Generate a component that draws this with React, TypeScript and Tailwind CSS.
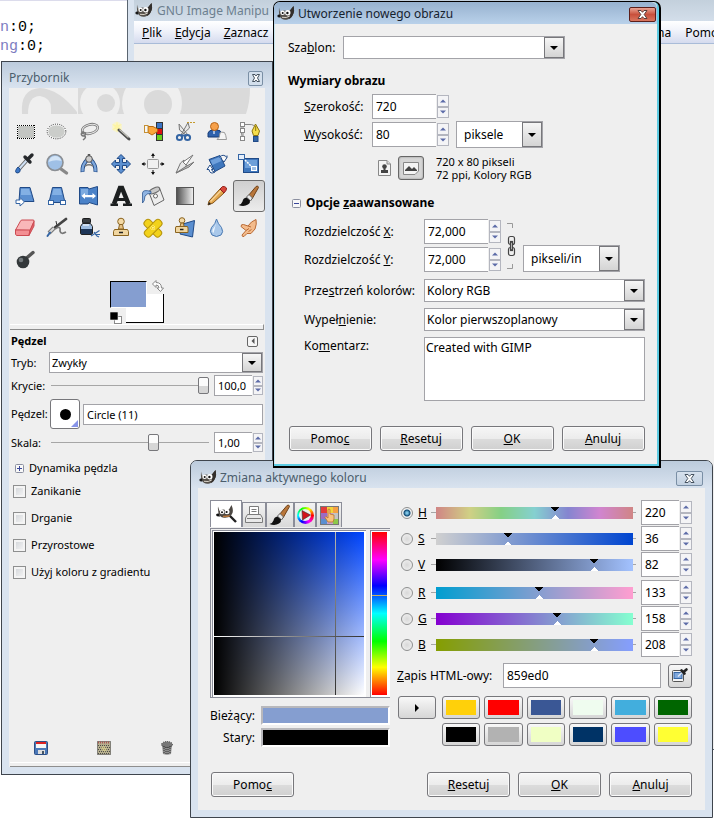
import React, { useState } from "react";
import type { ReactNode } from "react";

const FONT = "font-['Noto_Sans','Open_Sans',sans-serif]";

/* ---------- small shared pieces ---------- */

function Wilber({ size = 18 }: { size?: number }) {
  return (
    <svg width={size} height={size} viewBox="0 0 18 18" aria-hidden="true" className="shrink-0">
      <path d="M2 2.500 3 7Q4.500 5.500 7 5.500Q10 6.300 13 5.500L16.500 1Q18 6 15.800 10Q14.500 13.500 10.500 14.500Q5 15.500 3.500 12Q1.500 10 2 2.500Z" fill="#55504a" />
      <path d="M12.500 6 16.500 1Q18 6 15.800 10Q15 12.500 12 14Z" fill="#332f2c" />
      <path d="M3 9.500Q0.300 9 0.300 11Q0.500 12.800 3.500 12.500Z" fill="#191919" />
      <circle cx="5.600" cy="7.700" r="2.300" fill="#fff" />
      <circle cx="10.800" cy="7.700" r="2.700" fill="#fff" />
      <circle cx="5.700" cy="8" r="1" fill="#111" />
      <circle cx="10.400" cy="8" r="1.200" fill="#111" />
      <path d="M5 12.300Q9.500 13.500 13 10.800" stroke="#d8d2c8" strokeWidth="1" fill="none" />
    </svg>
  );
}

function CloseGlyph({ color }: { color: string }) {
  return (
    <svg width="11" height="9" viewBox="0 0 11 9" aria-hidden="true">
      <path d="M1 .5H4L5.500 2.300 7 .5H10L7.200 4.500 10 8.500H7L5.500 6.700 4 8.500H1L3.800 4.500Z" fill="#fff" stroke={color} strokeWidth="1" />
    </svg>
  );
}

function Caret({ dir, color = "#000", small = false }: { dir: "up" | "down" | "right" | "left"; color?: string; small?: boolean }) {
  const s = small ? 6 : 8;
  const d = {
    down: "M0 2H8L4 6Z",
    up: "M0 6H8L4 2Z",
    right: "M2 0V8L6 4Z",
    left: "M6 0V8L2 4Z",
  }[dir];
  return (
    <svg width={s} height={s} viewBox="0 0 8 8" aria-hidden="true" className="shrink-0">
      <path d={d} fill={color} />
    </svg>
  );
}

function Steps({ narrow = false, label }: { narrow?: boolean; label: string }) {
  const cls =
    "flex flex-1 items-center justify-center overflow-hidden border border-[#b4b6bf] bg-[#f4f4f6] " + (narrow ? "w-[10px]" : "w-[12px]");
  return (
    <span className="ml-px flex shrink-0 flex-col py-px">
      <button type="button" aria-label={label + " +"} className={cls}>
        <Caret dir="up" color="#5c6ba8" small />
      </button>
      <button type="button" aria-label={label + " -"} className={cls}>
        <Caret dir="down" color="#5c6ba8" small />
      </button>
    </span>
  );
}

function Spin({ id, value, label, width, narrow = false }: { id: string; value: string; label: string; width: string; narrow?: boolean }) {
  return (
    <span className={"flex shrink-0 " + (narrow ? "h-[21px] text-[11px]" : "h-[25px]")}>
      <input
        id={id}
        aria-label={label}
        defaultValue={value}
        className={"min-w-0 border border-r-0 border-[#a3a3a8] bg-white px-[3px] outline-none " + width}
      />
      <Steps narrow={narrow} label={label} />
    </span>
  );
}

function Select({ id, options, label, className, pad = "pl-[3px]" }: { id: string; options: string[]; label?: string; className: string; pad?: string }) {
  return (
    <span className={"flex border border-[#a3a3a8] bg-white " + className}>
      <select id={id} aria-label={label} className={"min-w-0 flex-1 appearance-none bg-transparent outline-none " + pad}>
        {options.map((o) => (
          <option key={o}>{o}</option>
        ))}
      </select>
      <span className="pointer-events-none flex w-[20px] shrink-0 items-center justify-center border border-[#77777b] bg-linear-to-b from-[#f6f6f6] to-[#d4d4d4]">
        <Caret dir="down" />
      </span>
    </span>
  );
}

function PushButton({ children }: { children: ReactNode }) {
  return (
    <button
      type="button"
      className="h-[25px] w-[83px] rounded-[3px] border border-[#77777b] bg-[linear-gradient(#f6f6f6,#ececec_50%,#dcdcdc_51%,#d0d0d0)] shadow-[inset_0_0_0_1px_#fafafa]"
    >
      {children}
    </button>
  );
}

function Expander({ open }: { open: boolean }) {
  return (
    <svg width="9" height="9" viewBox="0 0 9 9" aria-hidden="true" className="shrink-0">
      <rect x=".5" y=".5" width="8" height="8" rx="1" fill="#f8f8f8" stroke="#8b8fa0" />
      <path d={open ? "M2 4.500H7" : "M2 4.500H7M4.500 2V7"} stroke="#39479b" />
    </svg>
  );
}

/* ---------- tool icons, drawn on a 32 px cell ---------- */

const BLUE = "#5b8fd0";
const NAVY = "#204a87";

const toolIcons: { name: string; art: ReactNode }[] = [
  {
    name: "Zaznaczenie prostokątne",
    art: (
      <g>
        <rect x="8.500" y="9" width="17" height="14" fill="#c3c5c2" />
        <path d="M8 9.500H26M8 22.500H26M8.500 9V23M25.500 9V23" stroke="#fff" />
        <path d="M8 9.500H26M8 22.500H26M8.500 9V23M25.500 9V23" stroke="#000" strokeDasharray="1 1" />
      </g>
    ),
  },
  {
    name: "Zaznaczenie eliptyczne",
    art: (
      <g>
        <ellipse cx="15.500" cy="15.500" rx="9" ry="7" fill="#cbcdca" stroke="#fff" strokeWidth="1.400" />
        <ellipse cx="15.500" cy="15.500" rx="9.300" ry="7.300" fill="none" stroke="#222" strokeDasharray="1 1.200" />
      </g>
    ),
  },
  {
    name: "Odręczne zaznaczanie",
    art: (
      <g fill="none" stroke="#777" strokeWidth="1">
        <ellipse cx="17" cy="13" rx="8" ry="4.500" transform="rotate(-15 17 13)" strokeWidth="2.600" />
        <ellipse cx="17" cy="13" rx="8" ry="4.500" transform="rotate(-15 17 13)" stroke="#e6e6e6" />
        <path d="M10.500 15.500Q7 17.500 9 19.500Q12.500 21 12.500 17.500Q11 16 9.500 18M11.500 20Q14 21 10 24" strokeWidth="1.500" />
      </g>
    ),
  },
  {
    name: "Różdżka",
    art: (
      <g>
        <circle cx="12" cy="11" r="5" fill="#fff8b0" opacity=".6" />
        <path d="M12 5 13 9 17 8 14 11 17 14 13 13.500 12 17 11 13 7 14 10 11 7 8 11 9Z" fill="#fdf4a4" />
        <path d="M14 14 24 23" stroke="#4d4d4d" strokeWidth="3" strokeLinecap="round" />
        <path d="M14.500 13.500 23.500 21.500" stroke="#c4c4bc" strokeWidth="1.200" />
      </g>
    ),
  },
  {
    name: "Zaznaczanie według koloru",
    art: (
      <g stroke="#333" strokeWidth="1">
        <rect x="19.500" y="6.500" width="6" height="6" fill="#3a74c4" />
        <rect x="19.500" y="12.500" width="6" height="6" fill="#dd1111" />
        <rect x="19.500" y="18.500" width="6" height="6" fill="#6ad01c" />
        <path d="M11 10.500H16L20.500 13V15.500L15 19 11 16.500Z" fill="#fca63a" stroke="#b86a10" />
        <rect x="7.500" y="9.500" width="3.500" height="7" fill="#f6f6f6" stroke="#c49035" />
      </g>
    ),
  },
  {
    name: "Inteligentne nożyce",
    art: (
      <g fill="none">
        <path d="M12 19 19 6.500 20.500 12 14 18ZM19 19 10 8 10.500 14 17 19Z" fill="#e8e8e8" stroke="#777" />
        <circle cx="10.500" cy="21.500" r="2.600" stroke="#3465a4" strokeWidth="2" />
        <circle cx="18.500" cy="21.500" r="2.600" stroke="#3465a4" strokeWidth="2" />
        <path d="M12 19.500H17" stroke="#3465a4" strokeWidth="2" />
        <path d="M18 6.500H26" stroke="#c59a2d" strokeDasharray="2 1" />
      </g>
    ),
  },
  {
    name: "Wyodrębnienie pierwszego planu",
    art: (
      <g>
        <path d="M7 21V17Q8 14 12 14H16Q20 14 20 17V21Z" fill="#2f62ac" stroke="#173a74" />
        <circle cx="13.500" cy="10.500" r="4" fill="#f6a04a" stroke="#b7651a" />
        <path d="M13 15V18" stroke="#c7d8f0" strokeWidth="1.500" />
        <path d="M16 23.500Q19 22 19 17Q20 15.500 23.500 16.500Q25 19 25.500 23.500Z" fill="#f5f5f5" stroke="#999" />
      </g>
    ),
  },
  {
    name: "Ścieżki",
    art: (
      <g fill="none" stroke="#888">
        <path d="M9 20Q7 10 9 8.500H16Q22 8 23 13" />
        <path d="M10 9V22" />
        <rect x="7.500" y="6.500" width="4" height="4" fill="#fff" />
        <rect x="7.500" y="12.500" width="4" height="4" fill="#fff" />
        <rect x="7.500" y="20.500" width="4" height="4" fill="#fff" />
        <path d="M22.500 8 19 15 20.500 19.500H25L26.500 15Z" fill="#f5dd4a" stroke="#8c7410" />
        <path d="M22.700 10V15" stroke="#8c7410" />
        <rect x="20.500" y="20.500" width="4.500" height="5" fill="#3465a4" stroke={NAVY} />
      </g>
    ),
  },
  {
    name: "Pobieranie koloru",
    art: (
      <g>
        <path d="M18 12 10 21" stroke="#666" strokeWidth="4" />
        <path d="M18 12 10 21" stroke="#cfe0f4" strokeWidth="2" />
        <path d="M16 9 21 14M19 11 23 7" stroke="#25282b" strokeWidth="3.400" strokeLinecap="round" />
        <path d="M9 19Q5.500 23 7 24.500Q9 26 11 23.500Q12 21 9 19Z" fill="#3d78c8" stroke={NAVY} />
      </g>
    ),
  },
  {
    name: "Powiększenie",
    art: (
      <g>
        <path d="M20 21 25.500 25" stroke="#888" strokeWidth="3.400" strokeLinecap="round" />
        <circle cx="14" cy="14.500" r="8" fill="#9fc0e6" stroke="#8b8f94" strokeWidth="1.600" />
        <path d="M7.500 14Q9 8 14 8Q19 8 20.500 13Q14 11 7.500 14Z" fill="#d3e4f6" />
      </g>
    ),
  },
  {
    name: "Miarka",
    art: (
      <g fill="none">
        <path d="M14 12Q9 17 9.500 24M18 12Q23 17 22.500 24" stroke={NAVY} strokeWidth="4" />
        <path d="M14 12Q9 17 9.500 23.500M18 12Q23 17 22.500 23.500" stroke="#7fa8dc" strokeWidth="2.400" />
        <path d="M12 18Q16 15.500 20 18" stroke="#777" strokeWidth="1.500" />
        <path d="M16 6V10" stroke="#555" strokeWidth="2.500" />
        <circle cx="16" cy="11" r="3.300" fill="#ccc" stroke="#555" />
      </g>
    ),
  },
  {
    name: "Przesunięcie",
    art: (
      <path
        d="M16 6.500 20 10.500H17.500V14.500H21.500V12L25.500 16 21.500 20V17.500H17.500V21.500H20L16 25.500 12 21.500H14.500V17.500H10.500V20L6.500 16 10.500 12V14.500H14.500V10.500H12Z"
        fill={BLUE}
        stroke={NAVY}
      />
    ),
  },
  {
    name: "Wyrównanie",
    art: (
      <g>
        <rect x="10.500" y="11.500" width="11" height="9" rx="1" fill="#f0f0f0" stroke="#999" />
        <path d="M16 6V10M16 22V26M5 16H9M23 16H27" stroke="#111" />
        <path d="M16 5 18 8H14ZM16 27 18 24H14ZM4.500 16 7.500 14V18ZM27.500 16 24.500 14V18Z" fill="#111" />
      </g>
    ),
  },
  {
    name: "Kadrowanie",
    art: (
      <g stroke="#777" strokeLinejoin="round">
        <path d="M7 25 11.500 15 15 12 17.500 17 15 21Z" fill="#e8e8e8" />
        <path d="M14 14 24 7 17 17Z" fill="#fff" />
        <path d="M7 25 20 19 25 14 16 19Z" fill="#bbb" />
      </g>
    ),
  },
  {
    name: "Obrót",
    art: (
      <g>
        <path d="M8 11.500 19 7.500 24 18 14 23.500Z" fill="#3f77bd" stroke={NAVY} />
        <path d="M9.500 12.500 18.500 9 20.500 13 11.500 17Z" fill="#6fa0dc" />
        <path d="M18.500 9.500Q22 5 26 9.500V7.500M26 9.500 23 14 20.500 11M6 21.500 9 17 12 21.500H10.500Q11 24 14 24Q9 27 8 21.500Z" fill="#fff" stroke={NAVY} />
      </g>
    ),
  },
  {
    name: "Skalowanie",
    art: (
      <g>
        <rect x="10.500" y="10.500" width="15" height="14" fill="#3f77bd" stroke={NAVY} />
        <rect x="12" y="12" width="12" height="8" fill="#6d9fd9" />
        <rect x="5.500" y="6.500" width="6" height="5" fill="#e6effa" stroke="#3465a4" />
        <path d="M12 12 20 20" stroke="#fff" strokeWidth="1.500" strokeDasharray="2 1" />
        <rect x="18.500" y="18.500" width="5" height="4" fill="#9fc0e6" stroke="#fff" />
      </g>
    ),
  },
  {
    name: "Nachylenie",
    art: (
      <g>
        <path d="M11 7.500H21L25 21.500H10Z" fill={BLUE} stroke={NAVY} />
        <path d="M12 9H20L22 15H12Z" fill="#83b0e4" />
        <path d="M7 20H11V17.500L15.500 22 11 26V23.500H7Z" fill="#fff" stroke="#3465a4" />
      </g>
    ),
  },
  {
    name: "Perspektywa",
    art: (
      <g>
        <path d="M11.500 7.500H20.500L24 22.500H8Z" fill={BLUE} stroke={NAVY} />
        <path d="M12.500 9H19.500L21 15H11Z" fill="#83b0e4" />
        <rect x="7.500" y="20.500" width="5" height="4" fill="#fff" stroke="#3465a4" />
        <rect x="19.500" y="20.500" width="5" height="4" fill="#fff" stroke="#3465a4" />
      </g>
    ),
  },
  {
    name: "Odbicie",
    art: (
      <g>
        <path d="M6.500 7.500H15L16 9 24.500 6.500V25L16 22.500 15 24H6.500Z" fill="#4a82c8" stroke={NAVY} />
        <path d="M8 9H15V15L8 16Z" fill="#7dabe0" />
        <path d="M8.500 16 12 13V15H19.500V13L23 16 19.500 19V17.200H12V19Z" fill="#fff" />
      </g>
    ),
  },
  {
    name: "Tekst",
    art: (
      <g fill="none" stroke="#1c1f20">
        <path d="M9 24 15 8H17L23.500 24" strokeWidth="4.600" />
        <path d="M11 19.500H21" strokeWidth="3" />
        <path d="M5.500 24.800H13M18 24.800H27" strokeWidth="2.400" />
      </g>
    ),
  },
  {
    name: "Wypełnienie kubełkiem",
    art: (
      <g>
        <path d="M12 12.500 22.500 8 27 20 17 25.500Z" fill="#ededed" stroke="#666" />
        <ellipse cx="17.500" cy="10.500" rx="5.500" ry="2.500" transform="rotate(-24 17.500 10.500)" fill="#c9c9c9" stroke="#666" />
        <circle cx="18.500" cy="16" r="2" fill="#fff" stroke="#666" />
        <path d="M14 11.500Q6 9 5.500 13V23Q7.500 22 8 16Q10 13 14 13.500Z" fill="#8fb4e2" stroke={NAVY} strokeWidth=".7" />
      </g>
    ),
  },
  {
    name: "Gradient",
    art: (
      <g>
        <defs>
          <linearGradient id="tool-grad">
            <stop offset="0" stopColor="#4d4d4d" />
            <stop offset="1" stopColor="#f4f4f4" />
          </linearGradient>
        </defs>
        <rect x="7.500" y="7.500" width="17" height="17" fill="url(#tool-grad)" stroke="#555" />
      </g>
    ),
  },
  {
    name: "Ołówek",
    art: (
      <g>
        <path d="M8 21 19 9 23 13 12 23 7 25Z" fill="#e2a64d" stroke="#87561a" />
        <path d="M9.500 21.500 20 10.500" stroke="#f7d295" strokeWidth="1.500" />
        <path d="M19 9 21.500 6.500Q24 6 25.500 8Q26 10 23 13Z" fill="#d9483c" stroke="#8f231a" />
        <path d="M7 25 8 22 10 24Z" fill="#222" />
      </g>
    ),
  },
  {
    name: "Pędzel",
    art: (
      <g>
        <path d="M15 16 23 6.500Q25 5 25.500 7.500L19 19Z" fill="#b8763a" stroke="#6f431b" />
        <path d="M13.500 17 16 14.500 19.500 18 17.500 21Z" fill="#e8e8e8" stroke="#666" />
        <path d="M13.500 17.500Q10 18 9.500 21.500 8.500 24.500 5.500 25Q11 27 15 24.500 17.500 23 17 20.500Z" fill="#111" />
      </g>
    ),
  },
  {
    name: "Gumka",
    art: (
      <g stroke="#cc4b52" strokeLinejoin="round">
        <path d="M6.500 18 11.500 9Q12 8 13 8H24Q25.500 8 25 9.500L21 18.500Z" fill="#f9b7b9" />
        <path d="M6.500 18H21L20 23.500H7.500Q6 23.500 6.500 18Z" fill="#f38f93" />
        <path d="M21 18.500 25 9.500V14L20 23.500Z" fill="#e4676d" />
      </g>
    ),
  },
  {
    name: "Aerograf",
    art: (
      <g>
        <path d="M12 17 25 7" stroke="#444" strokeWidth="2.800" strokeLinecap="round" />
        <path d="M15 9Q17 13 14 16" stroke="#333" fill="none" />
        <path d="M8 21 13 16" stroke="#777" strokeWidth="4" />
        <path d="M8.500 20.500 13 16" stroke="#d8d8d8" strokeWidth="2" />
        <path d="M14 17Q20 13 19 19 20 23 25 20" stroke="#777" strokeWidth="1.700" fill="none" />
        <path d="M6.500 24 9 20.500" stroke="#3465a4" strokeWidth="2" strokeLinecap="round" />
      </g>
    ),
  },
  {
    name: "Stalówka",
    art: (
      <g>
        <rect x="9.500" y="6.500" width="8" height="4.500" rx="1" fill="#3b3f42" stroke="#1b1c1d" />
        <path d="M9.500 11.500H17.500L19.500 14.500V21Q19.500 22.500 18 22.500H9Q7.500 22.500 7.500 21V14.500Z" fill="#9dbce0" stroke="#222" />
        <rect x="8" y="17" width="11" height="5" fill="#1d3557" />
        <path d="M10 13H16" stroke="#e3edf8" strokeWidth="1.500" />
        <path d="M18 24 22 21.500 26.500 18.500M21 20 24 24 26 25M22 22.500H27" stroke="#3465a4" strokeWidth="1.200" fill="none" />
      </g>
    ),
  },
  {
    name: "Klonowanie",
    art: (
      <g stroke="#8a6420">
        <circle cx="16" cy="9.500" r="3.300" fill="#f3d9a6" />
        <path d="M14.500 12.500H17.500L18.500 17H13.500Z" fill="#e7c184" />
        <path d="M9.500 17.500H22.500L23.500 19.500V23.500H8.500V19.500Z" fill="#f0d6a1" />
        <path d="M14 20.500H18" stroke="#222" strokeWidth="1.500" />
      </g>
    ),
  },
  {
    name: "Łatka",
    art: (
      <g fill="#f2d21b" stroke="#b8960c">
        <rect x="5.500" y="12.500" width="21" height="7.500" rx="3" transform="rotate(45 16 16)" />
        <rect x="5.500" y="12.500" width="21" height="7.500" rx="3" transform="rotate(-45 16 16)" />
        <path d="M13 16H19M16 13V19M14 14 18 18M18 14 14 18" stroke="#fff19a" strokeDasharray="1 1" />
      </g>
    ),
  },
  {
    name: "Klonowanie z perspektywą",
    art: (
      <g>
        <path d="M14 12 25.500 8.500 23.500 25 11 22Z" fill={BLUE} stroke={NAVY} />
        <g stroke="#8a6420">
          <circle cx="13" cy="8.500" r="2.800" fill="#f3d9a6" />
          <path d="M12 11H14.500L15 14.500H11Z" fill="#e7c184" />
          <path d="M7 14.500H18.500L19 16V20.500H6.500V16Z" fill="#f0d6a1" />
          <path d="M11 17.500H14.500" stroke="#222" strokeWidth="1.500" />
        </g>
      </g>
    ),
  },
  {
    name: "Rozmycie",
    art: (
      <g>
        <path d="M15.500 7Q17 12 20.500 15.500Q23 20 20 23Q15.500 26 11 23Q8 19.500 10.500 15.500Q14.500 12 15.500 7Z" fill="#a9c8ea" stroke="#4a79b2" />
        <path d="M15 11Q14 15 11.500 17.500 11 20 12.500 21 14 16 15 11Z" fill="#eef5fc" />
      </g>
    ),
  },
  {
    name: "Smużenie",
    art: (
      <g stroke="#b96a35" strokeLinejoin="round">
        <path d="M9 23 13 18.500 8 14.500Q8 12 10.500 12.500L15 14 18.500 10 23 7.500Q24 12 22 17L18 21.500 14 21.500 11 24.500Q9 25 9 23Z" fill="#f3bb8b" />
        <path d="M13 18.500 16 16.500M15 14 18 15M15.500 19.500 18.500 17.500" fill="none" />
      </g>
    ),
  },
  {
    name: "Rozjaśnianie/Przyciemnianie",
    art: (
      <g>
        <path d="M17 14.500 24 8.500" stroke="#555" strokeWidth="3.400" strokeLinecap="round" />
        <circle cx="14" cy="18" r="6.300" fill="#33383a" />
        <circle cx="12" cy="16" r="2.300" fill="#73797c" />
      </g>
    ),
  },
];

/* ---------- GIMP main window, behind the dialogs ---------- */

function MainWindow() {
  return (
    <section className="absolute -right-10 bottom-[71px] left-[127px] top-0 border border-t-0 border-[#5a6570] bg-[#d9e3ef] pl-[6px]">
      <header className="flex h-[21px] items-center gap-1 bg-linear-to-b from-[#c3d0dc] to-[#d3deea] pl-px pt-px text-[#6c7f8f]">
        <Wilber />
        <span className="whitespace-nowrap">GNU Image Manipu</span>
      </header>
      <nav className="flex h-[23px] items-center whitespace-nowrap border-b border-[#a9bcd8] bg-linear-to-b from-white via-[#f2f4fb] via-40% to-[#d5dbee] px-2 pt-px">
        <div className="flex flex-1 gap-[13px]">
          <a href="#plik"><u>P</u>lik</a>
          <a href="#edycja"><u>E</u>dycja</a>
          <a href="#zaznaczenie"><u>Z</u>aznacz</a>
        </div>
        <div className="flex gap-[14px] pr-[21px]">
          <a href="#okna">Okna</a>
          <a href="#pomoc">Pomoc</a>
        </div>
      </nav>
      <div className="absolute bottom-0 left-[6px] right-0 top-[44px] bg-[#efefef]" />
    </section>
  );
}

/* ---------- toolbox ---------- */

function ToolSlider({ id, value, label }: { id: string; value: number; label: string }) {
  return (
    <input
      id={id}
      aria-label={label}
      type="range"
      defaultValue={value}
      className="h-[17px] min-w-0 flex-1 appearance-none bg-[linear-gradient(#a6a6a6,#a6a6a6)] bg-[length:100%_1px] bg-center bg-no-repeat [&::-webkit-slider-thumb]:h-[17px] [&::-webkit-slider-thumb]:w-[11px] [&::-webkit-slider-thumb]:appearance-none [&::-webkit-slider-thumb]:rounded-[2px] [&::-webkit-slider-thumb]:border [&::-webkit-slider-thumb]:border-[#77777b] [&::-webkit-slider-thumb]:bg-[linear-gradient(#fbfbfb_50%,#d6d6d6_50%)]"
    />
  );
}

function Toolbox() {
  const [tool, setTool] = useState("Pędzel");
  const checks = ["Zanikanie", "Drganie", "Przyrostowe", "Użyj koloru z gradientu"];
  return (
    <section className="absolute left-px top-[61px] w-[272px] border border-[#3f454d] bg-[#d9e3ef] px-[7px] pb-[7px] text-[11px] leading-4">
      <header className="-mx-[7px] flex h-[26px] items-center justify-between bg-linear-to-b from-[#bccbdc] to-[#d9e3ef] px-[7px] pt-[6px] text-[12px] text-[#4b5d6c]">
        <h2>Przybornik</h2>
        <button type="button" aria-label="Zamknij przybornik" className="mr-[2px] flex size-[15px] items-center justify-center rounded-[2px] border border-[#7a8fa5] bg-[#d3dfec]">
          <svg width="8" height="8" viewBox="0 0 8 8" aria-hidden="true">
            <path d="M.5 .5H3L4 2 5 .5H7.500L5.500 4 7.500 7.500H5L4 6 3 7.500H.5L2.500 4Z" fill="#fff" stroke="#45525f" />
          </svg>
        </button>
      </header>
      <div className="bg-[#efefef]">
        <svg viewBox="0 0 256 26" className="block h-[26px] w-full" aria-hidden="true">
          <path d="M13 26Q11 1 31 0Q50 1 68 24V26Z" fill="#dadada" />
          <path d="M69 0H241Q241 14 237 26H69Z" fill="#dadada" />
          <path d="M19 26Q19 8 31 8Q42 10 42 20V26Z" fill="#efefef" />
          <circle cx="91" cy="15" r="20" fill="#efefef" />
          <circle cx="97" cy="15" r="9" fill="#dadada" />
          <circle cx="143" cy="15" r="30" fill="#efefef" />
          <circle cx="149" cy="16" r="14" fill="#dadada" />
        </svg>
        <div className="grid grid-cols-8 pt-[2px]">
          {toolIcons.map((t) => (
            <button
              key={t.name}
              type="button"
              aria-label={t.name}
              aria-pressed={tool === t.name}
              onClick={() => setTool(t.name)}
              className={"relative h-[32px] " + (tool === t.name ? "rounded-[3px] border border-[#6b6b6b] bg-linear-to-b from-[#cfcfcf] to-[#ececec]" : "")}
            >
              <svg viewBox="0 0 32 32" className="absolute left-1/2 top-1/2 size-[32px] -translate-1/2" aria-hidden="true">
                {t.art}
              </svg>
            </button>
          ))}
        </div>
        <div className="relative mx-auto mt-[5px] h-[43px] w-[54px]">
          <button type="button" aria-label="Kolor tła" className="absolute bottom-px right-0 h-[29px] w-[38px] border-b border-r border-black bg-white" />
          <button type="button" aria-label="Kolor pierwszoplanowy" className="absolute left-0 top-0 h-[27px] w-[37px] border border-b-white border-l-black border-r-white border-t-black bg-[#859ed0]" />
          <svg viewBox="0 0 12 12" className="absolute bottom-0 left-0 size-[12px]" aria-hidden="true">
            <rect x="4.500" y="4.500" width="7" height="7" fill="#fff" stroke="#888" />
            <rect x="0" y="0" width="8" height="8" fill="#000" stroke="#eee" strokeWidth=".6" />
          </svg>
          <svg viewBox="0 0 12 12" className="absolute right-0 -top-px size-[12px]" aria-hidden="true">
            <path d="M.5 4 4 .5V2.500Q9.500 2.500 9.500 8H11.500L8.500 11.500 5 8H7Q7 5 4 5V7.500Z" fill="#fff" stroke="#888" />
          </svg>
        </div>
        <div className="ml-px mr-px h-[6px] border-b border-r border-t border-b-[#8e8e8e] border-r-[#8e8e8e] border-t-white" />

        <div className="pl-[2px] pr-[2px] pt-[3px]">
          <div className="flex items-center justify-between pr-[5px]">
            <h3 className="font-bold">Pędzel</h3>
            <button type="button" aria-label="Menu karty" className="flex size-[11px] items-center justify-center rounded-[2px] border border-[#666] bg-[#f6f6f6]">
              <Caret dir="left" color="#555" small />
            </button>
          </div>
          <div className="mt-[3px] flex items-center">
            <label htmlFor="tryb" className="w-[38px]">Tryb:</label>
            <Select id="tryb" options={["Zwykły"]} className="h-[21px] flex-1" pad="pl-[2px]" />
          </div>
          <div className="mt-[2px] flex items-center">
            <label htmlFor="krycie" className="w-[40px] whitespace-nowrap">Krycie:</label>
            <ToolSlider id="krycie" value={100} label="Krycie" />
            <span className="ml-[5px]"><Spin id="krycie-n" value="100,0" label="Krycie, wartość" width="w-[38px]" narrow /></span>
          </div>
          <div className="mt-[3px] flex items-center">
            <label htmlFor="pedzel" className="w-[39px] whitespace-nowrap">Pędzel:</label>
            <button type="button" aria-label="Wybór pędzla" className="relative mr-[3px] flex size-[30px] items-center justify-center rounded-[3px] border border-[#77777b] bg-white">
              <span className="size-[11px] rounded-full bg-black" />
              <svg viewBox="0 0 7 7" className="absolute bottom-px right-px size-[7px]" aria-hidden="true">
                <path d="M7 0V7H0Z" fill="#8794e8" />
              </svg>
            </button>
            <input id="pedzel" defaultValue="Circle (11)" className="h-[21px] min-w-0 flex-1 border border-[#a3a3a8] bg-white px-[3px]" />
          </div>
          <div className="mt-[3px] flex items-center">
            <label htmlFor="skala" className="w-[40px] whitespace-nowrap">Skala:</label>
            <ToolSlider id="skala" value={66} label="Skala" />
            <span className="ml-[5px]"><Spin id="skala-n" value="1,00" label="Skala, wartość" width="w-[38px]" narrow /></span>
          </div>
          <button type="button" className="mt-[7px] flex items-center gap-[5px] pl-1">
            <Expander open={false} />
            Dynamika pędzla
          </button>
          <div className="mt-[7px] flex flex-col gap-[11px] pl-[2px]">
            {checks.map((c) => (
              <label key={c} className="flex h-4 items-center gap-[5px]">
                <input
                  type="checkbox"
                  className="size-[13px] appearance-none border border-[#8e8f8f] bg-linear-to-br from-[#cfd2d6] to-[#f8f8f8] shadow-[inset_0_0_0_2px_#f4f4f4] checked:bg-[#3465a4]"
                />
                {c}
              </label>
            ))}
          </div>
        </div>

        <div className="mt-[161px] flex h-[14px] items-center justify-around pr-1">
          <button type="button" aria-label="Zapisz opcje">
            <svg width="14" height="14" viewBox="0 0 14 14" aria-hidden="true">
              <rect x=".5" y=".5" width="13" height="13" rx="1" fill="#4a78b8" stroke="#2d4f86" />
              <rect x="2" y="1" width="10" height="6" fill="#f6f6f6" />
              <rect x="2" y="1" width="10" height="2" fill="#d22" />
              <rect x="4" y="9" width="7" height="4" fill="#ddd" />
              <rect x="8" y="10" width="2" height="3" fill="#456" />
            </svg>
          </button>
          <button type="button" aria-label="Przywróć opcje">
            <svg width="14" height="14" viewBox="0 0 14 14" aria-hidden="true">
              <rect x=".5" y=".5" width="13" height="13" fill="#b5ae8e" stroke="#333" strokeDasharray="1 1" />
              <path d="M1 1.500H13" stroke="#a55" strokeDasharray="1 1" strokeWidth="2" />
              <path d="M1 4.500H13M1 8.500H13M1 12.500H13" stroke="#4b4b46" strokeDasharray="1 1" />
              <path d="M2 6.500H13M2 10.500H13" stroke="#4b4b46" strokeDasharray="1 1" />
              <path d="M4 6 7 5 10 8 8 11 5 9Z" fill="#e7dc8c" opacity=".5" />
            </svg>
          </button>
          <button type="button" aria-label="Usuń opcje">
            <svg width="12" height="14" viewBox="0 0 12 14" aria-hidden="true">
              <path d="M1 4H11L10 13Q6 14.500 2 13Z" fill="#8d8d8d" />
              <ellipse cx="6" cy="3.500" rx="5.500" ry="3" fill="#777" stroke="#444" strokeDasharray="1 1" />
              <path d="M3 5V13M5 6V13M7 6V13M9 5V13" stroke="#333" strokeDasharray="1 1" />
            </svg>
          </button>
          <button type="button" aria-label="Domyślne opcje" className="size-[14px]" />
        </div>
        <div className="ml-px mt-[7px] h-[5px] border-b border-t border-b-[#8e8e8e] border-t-white" />
      </div>
    </section>
  );
}

/* ---------- "new image" dialog ---------- */

function NewImageDialog() {
  return (
    <section className="absolute left-[273px] top-px w-[388px] rounded-t-[7px] border-2 border-l border-t border-black bg-[#efefef] shadow-[inset_-1px_-1px_0_1px_#5ecbe2,inset_1px_0_0_#c8e6f0]">
      <header className="mr-[2px] flex h-[22px] items-center rounded-t-[6px] bg-linear-to-b from-[#97b2cf] to-[#b9d1ea] pl-[3px] pt-[2px] text-[#16222e]">
        <Wilber />
        <h2 className="ml-[3px] flex-1">Utworzenie nowego obrazu</h2>
        <button type="button" aria-label="Zamknij" className="mr-px flex h-[15px] w-[27px] items-center justify-center rounded-[2px] border border-[#5c1f1a] bg-linear-to-b from-[#e9a394] via-[#c8503c] via-50% to-[#d9755f]">
          <CloseGlyph color="#5b3c3a" />
        </button>
      </header>
      <div className="px-[14px] pb-[15px] pt-3">
        <div className="flex items-center">
          <label htmlFor="szablon" className="w-[55px]">Sza<u>b</u>lon:</label>
          <Select id="szablon" options={[""]} className="h-[23px] w-[222px]" />
        </div>
        <h3 className="mt-[12px] font-bold leading-5">Wymiary obrazu</h3>
        <div className="pl-4">
          <div className="mt-[3px] flex items-center">
            <label htmlFor="szer" className="w-[68px]"><u>S</u>zerokość:</label>
            <Spin id="szer" value="720" label="Szerokość" width="w-[64px]" />
          </div>
          <div className="mt-[2px] flex items-center">
            <label htmlFor="wys" className="w-[68px]"><u>W</u>ysokość:</label>
            <Spin id="wys" value="80" label="Wysokość" width="w-[64px]" />
            <Select id="jedn" label="Jednostka" options={["piksele"]} className="ml-[7px] h-[27px] w-[87px]" pad="pl-[7px]" />
          </div>
          <div className="mt-[7px] flex items-center pl-[74px]">
            <button type="button" aria-label="Orientacja pionowa">
              <svg width="13" height="16" viewBox="0 0 13 16" aria-hidden="true">
                <path d="M.5 .5H9L12.500 4V15.500H.5Z" fill="#f4f4f4" stroke="#888" />
                <path d="M9 .5V4H12.500" fill="#ddd" stroke="#888" />
                <circle cx="6.500" cy="6.500" r="2.300" fill="#444" />
                <path d="M5.500 8H7.500V10H10V13H3V10H5.500Z" fill="#444" />
              </svg>
            </button>
            <button type="button" aria-label="Orientacja pozioma" aria-pressed="true" className="ml-[7px] flex h-[24px] w-[26px] items-center justify-center rounded-[3px] border border-[#666] bg-[#d6d6d6] shadow-[inset_0_0_2px_#888]">
              <svg width="16" height="13" viewBox="0 0 16 13" aria-hidden="true">
                <path d="M.5 .5H15.500V9L12 12.500H.5Z" fill="#f4f4f4" stroke="#888" />
                <path d="M2 9V8L6 4 9 7 11 5 14 8V9Z" fill="#444" />
              </svg>
            </button>
            <p className="ml-3 text-[11px] leading-[13px]">
              720 x 80 pikseli
              <br />
              72 ppi, Kolory RGB
            </p>
          </div>
        </div>
        <h3 className="mt-3 flex items-center gap-[5px] pl-1 font-bold leading-5">
          <Expander open />
          <span>Opcje <u>z</u>aawansowane</span>
        </h3>
        <div className="pl-4">
          <div className="mt-[6px] flex">
            <div className="flex flex-col gap-[3px]">
              <div className="flex items-center">
                <label htmlFor="rx" className="w-[120px]">Rozdzielczość <u>X</u>:</label>
                <Spin id="rx" value="72,000" label="Rozdzielczość X" width="w-[64px]" />
              </div>
              <div className="flex items-center">
                <label htmlFor="ry" className="w-[120px]">Rozdzielczość <u>Y</u>:</label>
                <Spin id="ry" value="72,000" label="Rozdzielczość Y" width="w-[64px]" />
              </div>
            </div>
            <button type="button" aria-label="Połącz rozdzielczości" className="ml-[6px]">
              <svg width="12" height="50" viewBox="0 0 12 50" aria-hidden="true" fill="none">
                <path d="M0 2.500H5.500V7M0 47.500H5.500V43" stroke="#999" />
                <g stroke="#444" strokeWidth="1.200">
                  <rect x="1.500" y="15.500" width="6" height="8" rx="2" />
                  <rect x="1.500" y="26.500" width="6" height="8" rx="2" />
                  <rect x="3.500" y="20.500" width="2" height="9" fill="#ccc" />
                </g>
              </svg>
            </button>
            <Select id="jedn2" label="Jednostka rozdzielczości" options={["pikseli/in"]} className="ml-1 h-[27px] w-[97px] self-end" pad="pl-[7px]" />
          </div>
          <div className="mt-[7px] flex items-center">
            <label htmlFor="przestrzen" className="w-[120px] whitespace-nowrap">Prze<u>s</u>trzeń kolorów:</label>
            <Select id="przestrzen" options={["Kolory RGB"]} className="h-[23px] flex-1" pad="pl-[2px]" />
          </div>
          <div className="mt-[6px] flex items-center">
            <label htmlFor="wypelnienie" className="w-[120px]">Wypeł<u>n</u>ienie:</label>
            <Select id="wypelnienie" options={["Kolor pierwszoplanowy"]} className="h-[23px] flex-1" pad="pl-[2px]" />
          </div>
          <div className="mt-[6px] flex">
            <label htmlFor="komentarz" className="w-[120px]">Ko<u>m</u>entarz:</label>
            <textarea id="komentarz" defaultValue="Created with GIMP" className="block h-[64px] min-w-0 flex-1 resize-none border border-[#a3a3a8] bg-white px-px py-px" />
          </div>
        </div>
        <div className="mt-[25px] flex justify-center gap-2">
          <PushButton>Pomo<u>c</u></PushButton>
          <PushButton><u>R</u>esetuj</PushButton>
          <PushButton><u>O</u>K</PushButton>
          <PushButton><u>A</u>nuluj</PushButton>
        </div>
      </div>
    </section>
  );
}

/* ---------- colour dialog ---------- */

const channels = [
  { k: "H", v: 220, max: 360, bg: "bg-[linear-gradient(to_right,#d08585,#d0d085_17%,#85d085_33%,#85d0d0_50%,#8585d0_67%,#d085d0_83%,#d08585)]", gap: "" },
  { k: "S", v: 36, max: 100, bg: "bg-[linear-gradient(to_right,#d0d0d0,#859ed0_36%,#0045d0)]", gap: "mt-px" },
  { k: "V", v: 82, max: 100, bg: "bg-[linear-gradient(to_right,#000,#859ed0_82%,#a3c2ff)]", gap: "mt-px" },
  { k: "R", v: 133, max: 255, bg: "bg-[linear-gradient(to_right,#009ed0,#859ed0_52%,#ff9ed0)]", gap: "mt-[3px]" },
  { k: "G", v: 158, max: 255, bg: "bg-[linear-gradient(to_right,#8500d0,#859ed0_62%,#85ffd0)]", gap: "mt-px" },
  { k: "B", v: 208, max: 255, bg: "bg-[linear-gradient(to_right,#859e00,#859ed0_82%,#859eff)]", gap: "mt-px" },
];

const THUMB =
  "[&::-webkit-slider-thumb]:h-[12px] [&::-webkit-slider-thumb]:w-[10px] [&::-webkit-slider-thumb]:appearance-none [&::-webkit-slider-thumb]:bg-[conic-gradient(from_-45deg_at_50%_5px,#000_90deg,transparent_0),conic-gradient(from_135deg_at_50%_8px,#fff_90deg,transparent_0)]";

function ChannelRow({ c }: { c: (typeof channels)[number] }) {
  return (
    <div className={"flex items-center " + c.gap}>
      <label className="flex w-[34px] items-center gap-[5px] pl-1">
        <input
          type="radio"
          name="channel"
          defaultChecked={c.k === "H"}
          className="size-[12px] appearance-none rounded-full border border-[#8e8f8f] bg-[radial-gradient(#d8d8d8,#f4f4f4)] checked:bg-[radial-gradient(#7cc4e6_0_1px,#0f4a74_3px,#f2f2f2_4px)]"
        />
        <u>{c.k}</u>
      </label>
      <span className="flex min-w-0 flex-1 items-center bg-[linear-gradient(#a6a6a6,#a6a6a6)] bg-[length:100%_1px] bg-center bg-no-repeat pl-[5px] pr-[3px]">
        <input
          type="range"
          aria-label={"Kanał " + c.k}
          max={c.max}
          defaultValue={c.v}
          className={"h-[12px] w-full min-w-0 appearance-none " + c.bg + " " + THUMB}
        />
      </span>
      <span className="ml-[5px]">
        <Spin id={"ch-" + c.k} value={String(c.v)} label={"Wartość " + c.k} width="w-[38px]" />
      </span>
    </div>
  );
}

const swatches = [
  { n: "złoty", c: "bg-[#ffd00a]" },
  { n: "czerwony", c: "bg-[#ff0000]" },
  { n: "granatowy", c: "bg-[#3a5795]" },
  { n: "miętowy", c: "bg-[#effcef]" },
  { n: "błękitny", c: "bg-[#42aedd]" },
  { n: "zielony", c: "bg-[#006600]" },
  { n: "czarny", c: "bg-[#000000]" },
  { n: "szary", c: "bg-[#b2b2b2]" },
  { n: "limonkowy", c: "bg-[#f0ffc4]" },
  { n: "morski", c: "bg-[#003366]" },
  { n: "fioletowy", c: "bg-[#4d4dff]" },
  { n: "żółty", c: "bg-[#ffff33]" },
];

const BTN = "rounded-[3px] border border-[#77777b] bg-linear-to-b from-[#f8f8f8] to-[#d6d6d6]";

function ColorTabs() {
  const tab = "flex h-[25px] items-center justify-center border border-b-0 border-[#8b8d98] bg-linear-to-b from-[#f2f2f2] to-[#d9d9d9]";
  return (
    <div role="tablist" className="flex h-[28px] items-end pb-px">
      <button role="tab" aria-selected="true" aria-label="GIMP" type="button" className="flex h-[27px] w-[32px] items-center justify-center border border-b-0 border-[#8b8d98] bg-white">
        <svg width="22" height="18" viewBox="0 0 22 18" aria-hidden="true">
          <path d="M3 1.500 4.500 6Q6 4.500 8.500 4.500Q12 5.500 14 4.500L16.500 0Q19 6 17 9Q15 12.500 11.500 12.500Q7 13.500 5 11Q2.500 8 3 1.500Z" fill="#4d4843" />
          <path d="M4 8.500Q1 8 1 10Q1.500 11.800 5 11.500Z" fill="#111" />
          <circle cx="7" cy="7" r="2.200" fill="#fff" />
          <circle cx="12" cy="6.800" r="2.500" fill="#fff" />
          <circle cx="7" cy="7.200" r="1" fill="#111" />
          <circle cx="11.600" cy="7" r="1.100" fill="#111" />
          <path d="M8 11.500 15 11" stroke="#b8763a" strokeWidth="1.500" />
          <path d="M15 11 21 17" stroke="#222" strokeWidth="2.400" />
        </svg>
      </button>
      <button role="tab" aria-label="CMYK" type="button" className={"w-[24px] " + tab}>
        <svg width="20" height="20" viewBox="0 0 20 20" aria-hidden="true" fill="#e9e9e9" stroke="#7c7c7c">
          <path d="M5.500 1.500H14.500V10H5.500Z" fill="#fff" />
          <path d="M7.500 4.500H12.500M7.500 6.500H12.500" />
          <path d="M3.500 9.500H16.500L18.500 13V17.500H1.500V13Z" />
          <path d="M3 13.500H17" />
        </svg>
      </button>
      <button role="tab" aria-label="Akwarela" type="button" className={"w-[28px] " + tab}>
        <svg width="22" height="22" viewBox="5 5 22 22" aria-hidden="true">
          <path d="M15 16 23 6.500Q25 5 25.500 7.500L19 19Z" fill="#b8763a" stroke="#6f431b" />
          <path d="M13.500 17 16 14.500 19.500 18 17.500 21Z" fill="#e8e8e8" stroke="#666" />
          <path d="M13.500 17.500Q10 18 9.500 21.500 8.500 24.500 5.500 25Q11 27 15 24.500 17.500 23 17 20.500Z" fill="#111" />
        </svg>
      </button>
      <button role="tab" aria-label="Koło" type="button" className={"w-[22px] " + tab}>
        <span className="flex size-[17px] shrink-0 items-center justify-center rounded-full bg-[conic-gradient(from_90deg,#f00,#f0f,#00f,#0ff,#0f0,#ff0,#f00)]">
          <span className="flex size-[12px] items-center justify-center rounded-full bg-[#eee]">
            <svg width="12" height="12" viewBox="0 0 12 12" aria-hidden="true">
              <path d="M11.500 6 3.500 11 3 1.500Z" fill="#d3121b" stroke="#333" strokeWidth=".6" />
            </svg>
          </span>
        </span>
      </button>
      <button role="tab" aria-label="Paleta" type="button" className={"w-[26px] " + tab}>
        <svg width="19" height="19" viewBox="0 0 19 19" aria-hidden="true">
          <rect x=".5" y=".5" width="18" height="18" fill="#c9a0c9" stroke="#777" />
          <rect x="1" y="1" width="6" height="6" fill="#e23b3b" />
          <rect x="7" y="1" width="6" height="6" fill="#f2d53c" />
          <rect x="13" y="1" width="5" height="6" fill="#f6a043" />
          <rect x="1" y="7" width="6" height="6" fill="#9a6cc4" />
          <rect x="13" y="7" width="5" height="6" fill="#c4c4c4" />
          <rect x="1" y="13" width="6" height="5" fill="#5b8fd0" />
          <rect x="13" y="13" width="5" height="5" fill="#8cc84a" />
          <path d="M8 3.500Q9 2.500 10 3.500V8L14 9V13L13 16H8L5 11.500 6 10.500 8 12Z" fill="#f9c27c" stroke="#b9742a" strokeWidth=".8" />
        </svg>
      </button>
    </div>
  );
}

function ColorDialog() {
  return (
    <section className="absolute left-[190px] top-[460px] w-[523px] rounded-t-[7px] border border-[#3f454d] bg-[#d9e3ef] px-[7px] pb-[7px]">
      <header className="-mx-[7px] flex h-[27px] items-center rounded-t-[6px] bg-linear-to-b from-[#bccbdc] to-[#d9e3ef] pl-2 pr-[9px] pt-[7px] text-[#4b5d6c]">
        <Wilber />
        <h2 className="ml-[3px] flex-1">Zmiana aktywnego koloru</h2>
        <button type="button" aria-label="Zamknij" className="flex h-[15px] w-[27px] items-center justify-center rounded-[2px] border border-[#7a8fa5] bg-linear-to-b from-[#d6e1ed] to-[#c3d1e1]">
          <CloseGlyph color="#45525f" />
        </button>
      </header>
      <div className="bg-[#efefef] pb-[13px] pl-3 pr-[13px] pt-3">
        <div className="flex justify-between gap-[7px]">
          <div className="w-[180px]">
            <ColorTabs />
            <div className="flex h-[170px] justify-between border-b border-l border-t border-[#8b8d98] bg-[#efefef] pl-px pt-px">
              <div className="h-[167px] w-[154px] border-l border-t border-[#8b8d98] bg-white p-px pr-[2px]">
                <div className="relative h-[163px] w-[150px] bg-[linear-gradient(to_right,#000,transparent),linear-gradient(to_bottom,#0045ff,#fff)]">
                  <span className="absolute inset-y-0 left-[121px] w-px bg-linear-to-b from-[#b8b8b0] to-[#333]" />
                  <span className="absolute inset-x-0 top-[104px] h-px bg-linear-to-r from-white to-[#333]" />
                </div>
              </div>
              <div className="h-[167px] w-[20px] border-l border-t border-[#8b8d98] bg-white py-px pl-px">
                <div className="relative h-[163px] w-[15px] bg-[linear-gradient(to_bottom,#f00,#f0f_17%,#00f_33%,#0ff_50%,#0f0_67%,#ff0_83%,#f00)]">
                  <span className="absolute inset-x-0 top-[63px] h-px bg-[#c8b060]" />
                </div>
              </div>
            </div>
            <div className="mt-2 flex items-center gap-[6px]">
              <span className="w-[45px] whitespace-nowrap text-right leading-[19px]">Bieżący:</span>
              <span className="h-[19px] flex-1 border-2 border-b-white border-l-[#b8b8bc] border-r-white border-t-[#b8b8bc] bg-[#859ed0]" />
            </div>
            <div className="mt-[3px] flex items-center gap-[6px]">
              <span className="w-[45px] text-right leading-[19px]">Stary:</span>
              <span className="h-[19px] flex-1 border-2 border-b-white border-l-[#b8b8bc] border-r-white border-t-[#b8b8bc] bg-black" />
            </div>
          </div>

          <div className="w-[295px]">
            {channels.map((c) => (
              <ChannelRow key={c.k} c={c} />
            ))}
            <div className="mt-[6px] flex items-center">
              <label htmlFor="html" className="w-[106px] whitespace-nowrap"><u>Z</u>apis HTML-owy:</label>
              <input id="html" defaultValue="859ed0" className="h-[25px] min-w-0 flex-1 border border-[#a3a3a8] bg-white px-[3px]" />
              <button type="button" aria-label="Pobierz kolor" className={"ml-[7px] flex size-[24px] items-center justify-center " + BTN}>
                <svg width="18" height="18" viewBox="0 0 18 18" aria-hidden="true">
                  <rect x="1.500" y="3.500" width="11" height="11" rx="1" fill="#f4f4f4" stroke="#555" />
                  <rect x="3" y="5.500" width="8" height="6" fill="#7ea7dc" stroke="#3465a4" />
                  <path d="M7 9.500 12 4.500" stroke="#dfe8f4" strokeWidth="1.500" />
                  <path d="M10.500 3.500 13.500 6.500M12.500 5 15.500 2.500" stroke="#222" strokeWidth="2.600" strokeLinecap="round" />
                </svg>
              </button>
            </div>
            <div className="mt-2 flex gap-[6px] pl-px">
              <button type="button" aria-label="Dodaj kolor do historii" className={"flex h-[23px] w-[38px] items-center justify-center " + BTN}>
                <Caret dir="right" />
              </button>
              <div className="grid flex-1 grid-cols-6 gap-x-1 gap-y-1">
                {swatches.map((s) => (
                  <button key={s.n} type="button" aria-label={"Kolor " + s.n} className={"flex h-[23px] p-[3px] " + BTN}>
                    <span className={"h-full w-full " + s.c} />
                  </button>
                ))}
              </div>
            </div>
          </div>
        </div>
        <div className="mt-[25px] flex gap-2 pl-px">
          <span className="flex-1"><PushButton>Pomo<u>c</u></PushButton></span>
          <PushButton><u>R</u>esetuj</PushButton>
          <PushButton><u>O</u>K</PushButton>
          <PushButton><u>A</u>nuluj</PushButton>
        </div>
      </div>
    </section>
  );
}

export default function App() {
  return (
    <main className={"relative h-screen min-h-[821px] overflow-hidden bg-white text-[12px] leading-[18px] text-black " + FONT}>
      <pre className="border-t border-[#dcdcec] pt-[17px] font-['Liberation_Mono',monospace] text-[15px] leading-[19px]">
        <span className="text-[#7c7cc0]">n</span>:0;{"\n"}
        <span className="text-[#7c7cc0]">ng</span>:0;
      </pre>
      <MainWindow />
      <Toolbox />
      <ColorDialog />
      <NewImageDialog />
    </main>
  );
}
